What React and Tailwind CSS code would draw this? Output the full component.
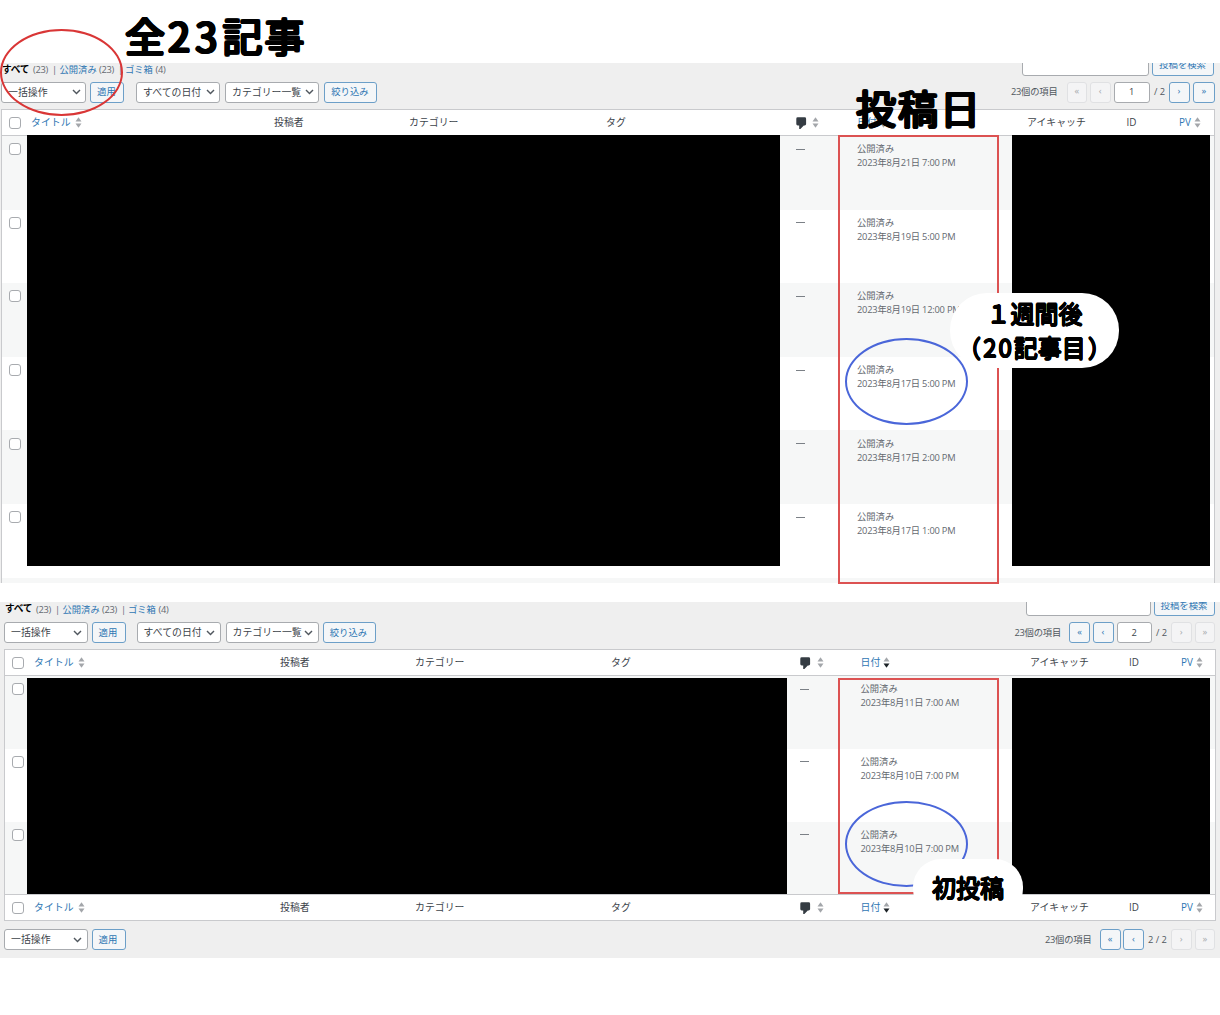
import React from "react";

function Select({ label, className }) {
  return (
    <div className={`flex h-[21px] items-center justify-between rounded-[3px] border border-[#a8abaf] bg-white pl-[6px] pr-[4.5px] text-[9.9px] text-[#3c434a] ${className}`}>
      <span className="whitespace-nowrap">{label}</span>
      <svg className="h-[6px] w-[9px] shrink-0" viewBox="0 0 9 6" fill="none" stroke="#50575e" strokeWidth="1.4">
        <path d="M1 1l3.5 3.6L8 1" />
      </svg>
    </div>
  );
}

function Button({ children, className }) {
  return (
    <div className={`flex h-[21px] items-center justify-center whitespace-nowrap rounded-[3px] border border-[#6c9fc8] bg-[#f4f6f8] pr-px pt-px text-[9.4px] text-[#2f77b3] ${className}`}>
      {children}
    </div>
  );
}

function PageButton({ glyph, disabled, className }) {
  return (
    <div
      className={`flex h-[21px] shrink-0 items-center justify-center rounded-[3px] border pb-px text-[9.5px] ${
        disabled ? "border-[#e0e1e3] bg-[#f4f4f5] text-[#a7aaad]" : "border-[#6c9fc8] bg-[#f4f6f8] text-[#2f77b3]"
      } ${className}`}
    >
      {glyph}
    </div>
  );
}

function PageInput({ value, className }) {
  return (
    <div className={`ml-[3px] flex h-[21px] items-center justify-center rounded-[3px] border border-[#a8abaf] bg-white text-[#3c434a] ${className}`}>
      {value}
    </div>
  );
}

function Sort({ active }) {
  return (
    <svg className="h-[11px] w-[7px] shrink-0" viewBox="0 0 7 11">
      <path d="M3.5 0.3L6.5 4.5H0.5z" fill="#a3a6aa" />
      <path d="M3.5 10.7L6.5 6.5H0.5z" fill={active ? "#1d2327" : "#a3a6aa"} />
    </svg>
  );
}

function Checkbox() {
  return <span className="block h-[12px] w-[12px] rounded-[3px] border border-[#a8abaf] bg-white" />;
}

function Bubble() {
  return (
    <svg className="h-[12px] w-[11px] shrink-0" viewBox="0 0 11 12" fill="#353c43">
      <path d="M1.7 0.3h7q1.4 0 1.4 1.4v5.4q0 1.4-1.4 1.4H7.8L4.4 11.9H3.2V8.5H1.7Q.3 8.5.3 7.1V1.7Q.3.3 1.7.3z" />
    </svg>
  );
}

function Views({ className }) {
  return (
    <div className={`flex h-[14px] items-center whitespace-nowrap text-[9.3px] text-[#646970] ${className}`}>
      <b className="w-[31px] text-[9.7px] tracking-[-0.3px] text-black">すべて</b>
      <span className="w-[19px] tracking-[-0.3px]">(23)</span>
      <span className="w-[7.5px]">|</span>
      <span className="w-[39.5px] text-[#2f77b3]">公開済み</span>
      <span className="w-[19px] tracking-[-0.3px]">(23)</span>
      <span className="w-[7px]">|</span>
      <span className="w-[30.5px] text-[#2f77b3]">ゴミ箱</span>
      <span className="tracking-[-0.3px]">(4)</span>
    </div>
  );
}

function HeadRow({ cols, border, sorted, className }) {
  return (
    <div className={`grid items-center border-[#c9cacd] bg-white text-[9.9px] text-[#3c434a] ${cols} ${border} ${className}`}>
      <div className="pl-[7px]"><Checkbox /></div>
      <div className="flex items-center gap-[4px] text-[#2f77b3]"><span>タイトル</span><Sort /></div>
      <div>投稿者</div>
      <div>カテゴリー</div>
      <div>タグ</div>
      <div className="flex items-center gap-[5.5px]"><Bubble /><Sort /></div>
      <div className="flex items-center gap-[3px] text-[#2f77b3]"><span>日付</span><Sort active={sorted} /></div>
      <div className="whitespace-nowrap">アイキャッチ</div>
      <div>ID</div>
      <div className="flex items-center gap-[3.5px] text-[#2f77b3]"><span>PV</span><Sort /></div>
    </div>
  );
}

function PostRow({ cols, date, shaded, className }) {
  return (
    <div className={`grid items-start ${shaded ? "bg-[#f6f7f7]" : "bg-white"} ${cols} ${className}`}>
      <div className="pl-[7px] pt-[1px]"><Checkbox /></div>
      <div className="col-span-4" />
      <div className="flex h-[14px] items-center"><span className="h-px w-[9px] bg-[#7b8086]" /></div>
      <div className="whitespace-nowrap text-[9.3px] leading-[14px] text-[#646970]">
        <div>公開済み</div>
        <div className="tracking-[-0.22px]">{date}</div>
      </div>
    </div>
  );
}

const colsA = "grid-cols-[29px_243px_135px_197px_189.5px_61.5px_170px_99.5px_52.5px_1fr]";
const colsB = "grid-cols-[29px_246px_135px_196px_189px_60.5px_169.5px_99px_52px_1fr]";

const postsA = [
  "2023年8月21日 7:00 PM",
  "2023年8月19日 5:00 PM",
  "2023年8月19日 12:00 PM",
  "2023年8月17日 5:00 PM",
  "2023年8月17日 2:00 PM",
  "2023年8月17日 1:00 PM",
];
const postsB = ["2023年8月11日 7:00 AM", "2023年8月10日 7:00 PM", "2023年8月10日 7:00 PM"];

function PanelA() {
  return (
    <section className="h-[520px] overflow-hidden bg-[#efefef]">
      <div className="flex h-[18px] items-start pr-[6px]">
        <Views className="ml-[2px]" />
        <div className="-mt-[8.5px] ml-auto h-[21px] w-[127px] rounded-[3px] border border-[#a8abaf] bg-white" />
        <Button className="-mt-[8.5px] ml-[3px] w-[62px]">投稿を検索</Button>
      </div>
      <div className="mt-[0.5px] flex h-[21px] items-center pl-px pr-[5.5px] text-[9.3px] text-[#50575e]">
        <Select label="一括操作" className="w-[85px]" />
        <Button className="ml-[4px] w-[34px]">適用</Button>
        <Select label="すべての日付" className="ml-[12px] w-[84px]" />
        <Select label="カテゴリー一覧" className="ml-[5px] w-[94px]" />
        <Button className="ml-[5px] w-[53px]">絞り込み</Button>
        <span className="ml-auto tracking-[-0.2px]">23個の項目</span>
        <PageButton glyph="«" disabled className="ml-[9px] w-[20.5px]" />
        <PageButton glyph="‹" disabled className="ml-[3px] w-[20.5px]" />
        <PageInput value="1" className="w-[36.5px]" />
        <span className="ml-[4px] w-[14.5px] whitespace-nowrap">/ 2</span>
        <PageButton glyph="›" className="w-[21px]" />
        <PageButton glyph="»" className="ml-[3.5px] w-[21.5px]" />
      </div>
      <div className="ml-px mr-[5px] mt-[6.5px] h-[474px] border-x border-t border-[#c9cacd]">
        <HeadRow cols={colsA} border="border-b" className="h-[26px]" />
        {postsA.map((d, i) => (
          <PostRow key={d} cols={colsA} date={d} shaded={i % 2 === 0} className="h-[73.6px] pt-[6.3px]" />
        ))}
        <div className="h-[8px] bg-[#f6f7f7]" />
      </div>
    </section>
  );
}

function PanelB() {
  return (
    <section className="mt-[19px] h-[356px] overflow-hidden bg-[#efefef]">
      <div className="flex h-[20px] items-start pr-[5px]">
        <Views className="ml-[5px] mt-[0.5px]" />
        <div className="-mt-[7px] ml-auto h-[21px] w-[125px] rounded-[3px] border border-[#a8abaf] bg-white" />
        <Button className="-mt-[7px] ml-[3px] w-[61px]">投稿を検索</Button>
      </div>
      <div className="flex h-[21px] items-center pl-[4px] pr-[5px] text-[9.3px] text-[#50575e]">
        <Select label="一括操作" className="w-[83.5px]" />
        <Button className="ml-[4px] w-[34px]">適用</Button>
        <Select label="すべての日付" className="ml-[11px] w-[84px]" />
        <Select label="カテゴリー一覧" className="ml-[5px] w-[93px]" />
        <Button className="ml-[4px] w-[53px]">絞り込み</Button>
        <span className="ml-auto tracking-[-0.2px]">23個の項目</span>
        <PageButton glyph="«" className="ml-[8px] w-[21px]" />
        <PageButton glyph="‹" className="ml-[2.5px] w-[21px]" />
        <PageInput value="2" className="w-[35.5px]" />
        <span className="ml-[4px] w-[15px] whitespace-nowrap">/ 2</span>
        <PageButton glyph="›" disabled className="w-[20.5px]" />
        <PageButton glyph="»" disabled className="ml-[3px] w-[20.5px]" />
      </div>
      <div className="ml-[4px] mr-[4px] mt-[6px] h-[272px] border border-[#c9cacd]">
        <HeadRow cols={colsB} border="border-b" sorted className="h-[26px]" />
        {postsB.map((d, i) => (
          <PostRow key={i} cols={colsB} date={d} shaded={i % 2 === 0} className="h-[72.8px] pt-[6px]" />
        ))}
        <HeadRow cols={colsB} border="border-t" sorted className="h-[26px]" />
      </div>
      <div className="mt-[8px] flex h-[21px] items-center pl-[4px] pr-[5px] text-[9.3px] text-[#50575e]">
        <Select label="一括操作" className="w-[83.5px]" />
        <Button className="ml-[4px] w-[34px]">適用</Button>
        <span className="ml-auto tracking-[-0.2px]">23個の項目</span>
        <PageButton glyph="«" className="ml-[8px] w-[21px]" />
        <PageButton glyph="‹" className="ml-[2.5px] w-[21px]" />
        <span className="ml-[4px] w-[23px] whitespace-nowrap">2 / 2</span>
        <PageButton glyph="›" disabled className="w-[20.5px]" />
        <PageButton glyph="»" disabled className="ml-[3px] w-[20.5px]" />
      </div>
    </section>
  );
}

/* Shadows placed on a small circle thicken the strokes and round their ends. */
const roundLarge =
  "[text-shadow:1.4px_0_#000,-1.4px_0_#000,0_1.4px_#000,0_-1.4px_#000,1px_1px_#000,-1px_1px_#000,1px_-1px_#000,-1px_-1px_#000]";
const roundSmall =
  "[text-shadow:0.7px_0_#000,-0.7px_0_#000,0_0.7px_#000,0_-0.7px_#000,0.5px_0.5px_#000,-0.5px_0.5px_#000,0.5px_-0.5px_#000,-0.5px_-0.5px_#000]";

export default function App() {
  return (
    <main className="relative h-[1015px] w-[1220px] overflow-hidden bg-white pt-[63px] font-['Open_Sans','Noto_Sans_CJK_JP',sans-serif]">
      <PanelA />
      <PanelB />

      {/* Redacted regions */}
      <div className="absolute left-[27px] top-[135px] h-[431px] w-[753px] bg-black" />
      <div className="absolute left-[1012px] top-[135px] h-[431px] w-[198px] bg-black" />
      <div className="absolute left-[27px] top-[678px] h-[216px] w-[760px] bg-black" />
      <div className="absolute left-[1012px] top-[678px] h-[216px] w-[198px] bg-black" />

      {/* Highlights */}
      <div className="absolute left-[838px] top-[135px] h-[449px] w-[161px] border-2 border-[#dc5252]" />
      <div className="absolute left-[838px] top-[678px] h-[216px] w-[161px] border-2 border-[#dc5252]" />
      <div className="absolute left-0 top-[29px] h-[87px] w-[123px] rounded-[50%] border-2 border-[#d93636]" />
      <div className="absolute left-[845px] top-[338px] h-[87px] w-[123px] rounded-[50%] border-2 border-[#4a66d9]" />
      <div className="absolute left-[845px] top-[801px] h-[86px] w-[123px] rounded-[50%] border-2 border-[#4a66d9]" />

      {/* Captions */}
      <div className={`absolute left-[125px] top-[5px] whitespace-nowrap font-['Noto_Sans_CJK_JP',sans-serif] text-[40px] leading-[60px] text-black ${roundLarge}`}>
        全<span className="pl-[3px] tracking-[5px]">23</span>記<span className="pl-[2px]">事</span>
      </div>
      <div className={`absolute left-[856px] top-[77px] whitespace-nowrap font-['Noto_Sans_CJK_JP',sans-serif] text-[40px] leading-[60px] tracking-[2px] text-black ${roundLarge}`}>
        投稿日
      </div>
      <div className={`absolute left-[950px] top-[293px] h-[75px] w-[169px] rounded-[37px] bg-white pt-[3px] text-center font-['Noto_Sans_CJK_JP',sans-serif] text-[24px] leading-[33.5px] text-black ${roundSmall}`}>
        <div className="whitespace-nowrap">１週間後</div>
        <div className="whitespace-nowrap"><span className="pr-[2px]">（</span><span className="tracking-[2px]">20</span>記事目<span className="pl-[2px]">）</span></div>
      </div>
      <div className={`absolute left-[913px] top-[859px] flex h-[58px] w-[110px] justify-center rounded-[28px] bg-white pt-[10.5px] font-['Noto_Sans_CJK_JP',sans-serif] text-[24px] leading-[34px] text-black ${roundSmall}`}>
        初投稿
      </div>
    </main>
  );
}
